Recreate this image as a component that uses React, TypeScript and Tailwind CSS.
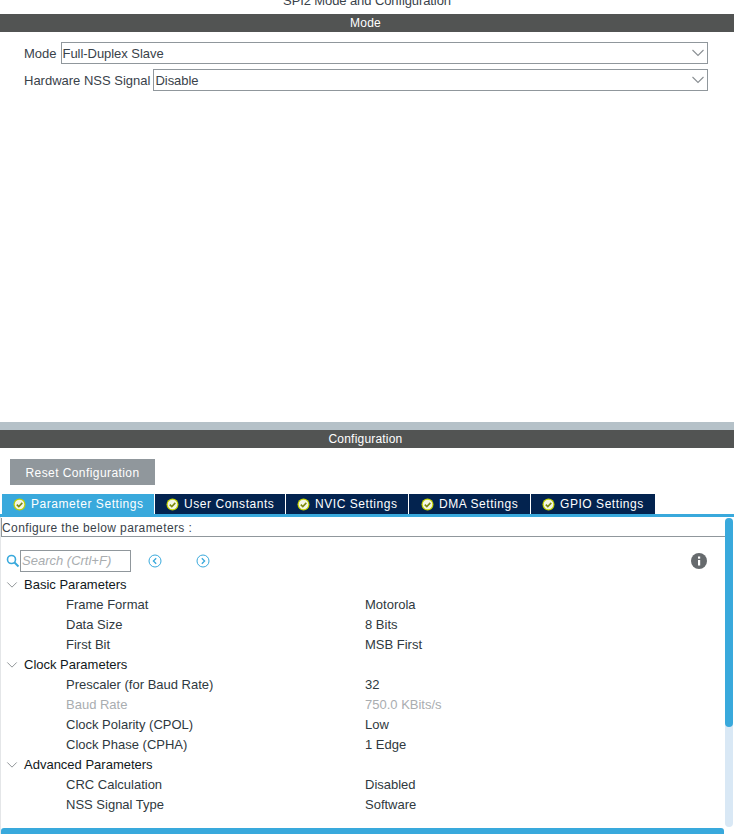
import React from 'react';

const sans = "font-['Liberation_Sans',Arial,sans-serif]";

const Check = () => (
  <svg width="13" height="13" viewBox="0 0 13 13" className="shrink-0">
    <circle cx="6.5" cy="6.5" r="6" fill="#c3d200" />
    <circle cx="6.5" cy="6.5" r="4.8" fill="#f4f6e4" />
    <path d="M3.8 6.6 L5.8 8.6 L9.3 4.9" fill="none" stroke="#7d8a10" strokeWidth="1.6" />
  </svg>
);

const Chevron = ({ size = 14, color = '#8a8f93' }: { size?: number; color?: string }) => (
  <svg width={size} height={size} viewBox="0 0 14 14" className="shrink-0">
    <path d="M1.5 4 L7 9.5 L12.5 4" fill="none" stroke={color} strokeWidth="1.1" />
  </svg>
);

const Bar = ({ title }: { title: string }) => (
  <div className="h-[18px] pr-[3px] bg-[#525453] text-white text-[12px] leading-[18px] text-center tracking-[0.2px]">{title}</div>
);

const Select = ({ value }: { value: string }) => (
  <div className="flex-1 h-[22px] border border-[#90979c] flex items-center justify-between pl-[1px] pr-[2px] text-[13px] tracking-[-0.05px] text-[#39424a]">
    <span className="pt-[1px]">{value}</span>
    <Chevron />
  </div>
);

const tabs = [
  { label: 'Parameter Settings', w: 'w-[152px]', bg: 'bg-[#39a9dc]', pad: 'pl-[11px]' },
  { label: 'User Constants', w: 'w-[130px]', bg: 'bg-[#03234f]', pad: 'pl-[11px]' },
  { label: 'NVIC Settings', w: 'w-[122px]', bg: 'bg-[#03234f]', pad: 'pl-[11px]' },
  { label: 'DMA Settings', w: 'w-[121px]', bg: 'bg-[#03234f]', pad: 'pl-[12px]' },
  { label: 'GPIO Settings', w: 'w-[124px]', bg: 'bg-[#03234f]', pad: 'pl-[11px]' },
];

const groups = [
  {
    name: 'Basic Parameters',
    rows: [
      ['Frame Format', 'Motorola'],
      ['Data Size', '8 Bits'],
      ['First Bit', 'MSB First'],
    ],
  },
  {
    name: 'Clock Parameters',
    rows: [
      ['Prescaler (for Baud Rate)', '32'],
      ['Baud Rate', '750.0 KBits/s', 'off'],
      ['Clock Polarity (CPOL)', 'Low'],
      ['Clock Phase (CPHA)', '1 Edge'],
    ],
  },
  {
    name: 'Advanced Parameters',
    rows: [
      ['CRC Calculation', 'Disabled'],
      ['NSS Signal Type', 'Software'],
    ],
  },
];

export default function App() {
  return (
    <div className={`${sans} w-[734px] h-[834px] overflow-hidden bg-white flex flex-col`}>
      {/* Top section */}
      <div className="h-[14px] overflow-hidden flex items-end justify-center pb-[5px]">
        <span className="text-[13px] leading-[16px] text-[#39424a] tracking-[-0.1px]">SPI2 Mode and Configuration</span>
      </div>
      <Bar title="Mode" />
      <div className="h-[390px] pt-[10px] pl-[24px] pr-[26px] flex flex-col gap-[5px]">
        <div className="flex items-center gap-[4px]">
          <span className="pt-[1px] text-[13px] text-[#39424a]">Mode</span>
          <Select value="Full-Duplex Slave" />
        </div>
        <div className="flex items-center gap-[3px]">
          <span className="pt-[1px] text-[13px] text-[#39424a]">Hardware NSS Signal</span>
          <Select value="Disable" />
        </div>
      </div>

      {/* Configuration section */}
      <div className="h-[8px] bg-[#b5c1c8]" />
      <Bar title="Configuration" />
      <div className="pt-[11px] pl-[10px]">
        <div className="w-[145px] h-[26px] pt-[1px] bg-[#90979c] text-white text-[12px] tracking-[0.42px] flex items-center justify-center">
          Reset Configuration
        </div>
      </div>
      <div className="mt-[9px] pl-[2px] flex gap-[1px]">
        {tabs.map((t) => (
          <div key={t.label} className={`${t.w} ${t.bg} ${t.pad} h-[20px] flex items-center gap-[5px] text-white text-[12px] tracking-[0.55px]`}>
            <Check />
            <span>{t.label}</span>
          </div>
        ))}
      </div>
      <div className="h-[3px] bg-[#39a9dc]" />

      <div className="flex-1 flex border-l border-[#e4e6e8] min-h-0">
        <div className="flex-1 flex flex-col">
          <div className="h-[19px] mt-px border-b border-l border-[#90979c] text-[12px] tracking-[0.4px] text-[#39424a] leading-[20px]">
            Configure the below parameters :
          </div>
          <div className="h-[22px] mt-[13px] flex items-center pl-[5px]">
            <svg width="14" height="14" viewBox="0 0 14 14" className="shrink-0">
              <circle cx="5.5" cy="5.5" r="4" fill="none" stroke="#39a9dc" strokeWidth="1.6" />
              <path d="M8.5 8.5 L12.5 12.5" stroke="#39a9dc" strokeWidth="2" />
            </svg>
            <div className="w-[111px] h-[22px] border border-[#90979c] pl-[1px] text-[13px] italic text-[#a9adb0] leading-[20px]">
              Search (Crtl+F)
            </div>
            <svg width="14" height="14" viewBox="0 0 14 14" className="ml-[17px] shrink-0">
              <circle cx="7" cy="7" r="6" fill="none" stroke="#39a9dc" strokeWidth="1" />
              <path d="M8.2 4.2 L5.4 7 L8.2 9.8" fill="none" stroke="#39a9dc" strokeWidth="1.3" />
            </svg>
            <svg width="14" height="14" viewBox="0 0 14 14" className="ml-[34px] shrink-0">
              <circle cx="7" cy="7" r="6" fill="none" stroke="#39a9dc" strokeWidth="1" />
              <path d="M5.8 4.2 L8.6 7 L5.8 9.8" fill="none" stroke="#39a9dc" strokeWidth="1.3" />
            </svg>
            <svg width="16" height="16" viewBox="0 0 16 16" className="ml-auto mr-[18px] shrink-0">
              <circle cx="8" cy="8" r="8" fill="#666a6d" />
              <rect x="7" y="7" width="2.2" height="5.5" fill="#fff" />
              <rect x="7" y="3.5" width="2.2" height="2.2" fill="#fff" />
            </svg>
          </div>
          <div className="mt-[3px]">
            {groups.map((g) => (
              <div key={g.name}>
                <div className="h-[20px] flex items-center text-[13px] text-[#111820] pl-[5px] gap-[6px]">
                  <Chevron size={12} />
                  <span>{g.name}</span>
                </div>
                {g.rows.map(([label, value, off]) => (
                  <div key={label} className={`h-[20px] flex items-center text-[13px] pl-[65px] ${off ? 'text-[#a9adb0]' : 'text-[#2f3940]'}`}>
                    <span className="w-[299px]">{label}</span>
                    <span>{value}</span>
                  </div>
                ))}
              </div>
            ))}
          </div>
          <div className="mt-auto h-[6px] rounded-t-[3px] bg-[#39a9dc] mr-[1px]" />
        </div>
        {/* Vertical scrollbar */}
        <div className="w-[8px] mr-px mt-px mb-[7px] bg-[#d9e8f5] rounded-[4px] flex flex-col">
          <div className="h-[209px] bg-[#39a9dc] rounded-[4px]" />
        </div>
      </div>
    </div>
  );
}
